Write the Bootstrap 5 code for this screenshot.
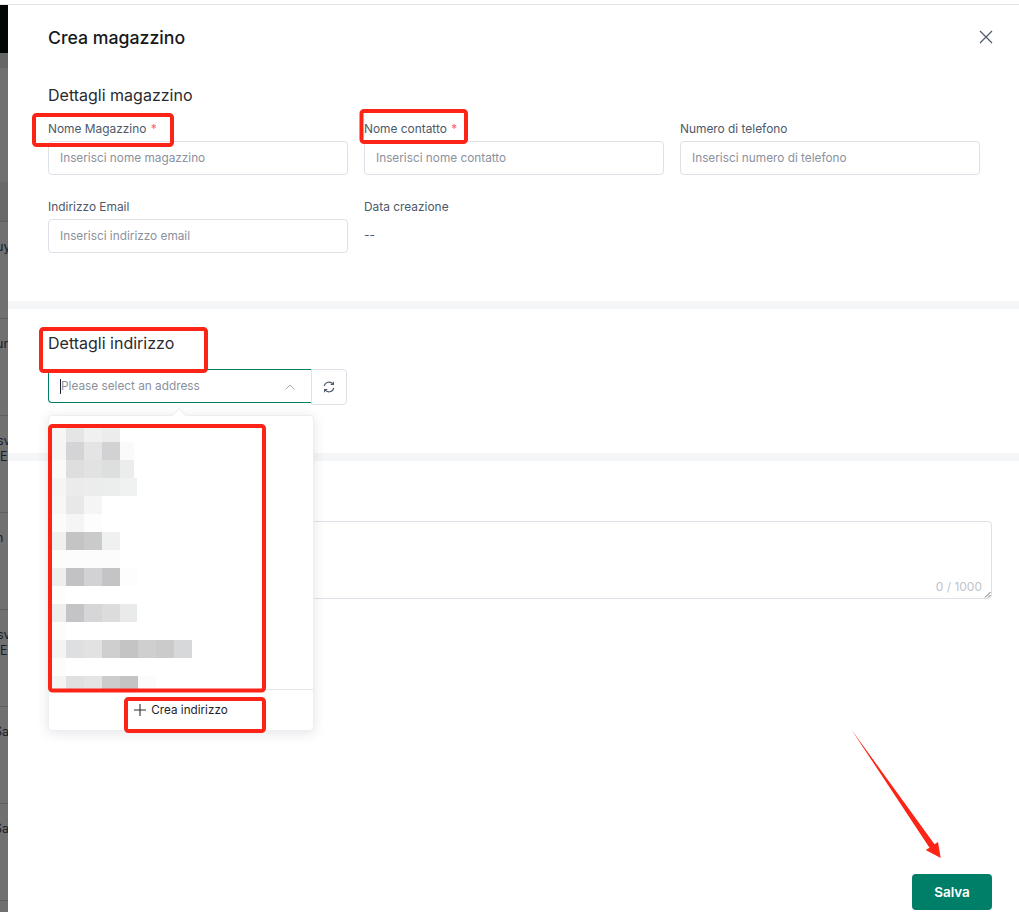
<!DOCTYPE html>
<html lang="it">
<head>
<meta charset="utf-8">
<title>Crea magazzino</title>
<link href="https://cdn.jsdelivr.net/npm/bootstrap@5.3.0/dist/css/bootstrap.min.css" rel="stylesheet">
<style>
html,body{height:912px;overflow:hidden}
body{font-family:Inter,"Noto Sans",sans-serif;color:#1f2329;background:#fff;font-size:13px}
.stage{height:912px;width:1019px;position:relative;padding-top:4px;overflow:hidden}
.topline{height:1px;background:#e3e4e6}
.shell{height:907px}
.strip{width:8px;flex:none;background:#707070;overflow:hidden;color:#16202b;font-size:12.500px;line-height:16px}
.strip-black{height:48px;background:#020605}
.strip-a{height:15px;background:#666}
.strip-b{height:114px}
.strip-c{height:40px;background:#696969;border-bottom:1px solid #5e5e5e}
.strip-row{height:97px;border-bottom:1px solid #5e5e5e;padding-top:17px;white-space:nowrap}
.strip-row span{display:block;margin-left:-4px}
.strip-row span.clip-s{margin-left:-3px}
.strip-row span.clip-e{margin-left:0}
.strip-row span.clip-a{margin-left:-6px}
.panel{flex:1;min-width:0;background:#fff;position:relative}
.head{height:66px;padding:0 26px 0 40px}
.head h1{font-size:17.700px;font-weight:500;margin:0;color:#16191d;line-height:24px}
.x-btn{border:0;background:none;padding:0;line-height:0;margin-top:-2px}
.sect{padding:0 40px}
.sect-title{font-size:16px;font-weight:400;color:#272b30;line-height:20px;margin:0}
.sect-one{height:230px;padding-top:14px}
.band{height:8px;background:#f5f6f8}
.grid3{display:grid;grid-template-columns:300px 300px 300px;column-gap:16px;row-gap:22px;margin-top:14px}
.fld-label{display:block;font-size:11.900px;line-height:20px;color:#4e5969;margin-bottom:2px}
.fld-label i{font-style:normal;color:#f5666a;margin-left:1px}
.fld-input{display:block;height:34px;width:100%;border:1px solid #dfe1e8;border-radius:4px;padding:0 11px;font-size:11.800px;color:#333;outline:0;font-family:inherit}
.fld-input::placeholder,.addr-ph{color:#8b919d}
.dash{line-height:32px;color:#4e5969;font-size:12px}
.sect-two{height:144px;padding-top:24px}
.addr{margin-top:16px;align-items:flex-start}
.addr-sel{width:264px;height:34px;border:1px solid #007f68;border-right:0;border-radius:4px 0 0 4px;padding:1px 17px 0 11px;font-size:11.800px}
.caret{width:1px;height:15px;background:#1c2733}
.addr-btn{width:36px;height:36px;margin-left:-1px;border:1px solid #dfe1e8;border-radius:0 4px 4px 0;background:#fff;padding:0;line-height:0}
.sect-three{padding-top:60px}
.note{height:78px;border:1px solid #dfe1e8;border-radius:4px;margin-right:-13px;position:relative}
.note-count{position:absolute;right:9px;bottom:3px;font-size:12px;line-height:16px;color:#bfc3cb}
.grip{position:absolute;right:0;bottom:0}
.pop{position:absolute;left:40px;top:410px;width:266px;height:316px;background:#fff;border:1px solid #eceef2;border-radius:4px;box-shadow:0 2px 12px rgba(40,45,70,.13);z-index:3}
.pop::before{content:"";position:absolute;left:125px;top:-6px;width:10px;height:10px;background:#fff;transform:rotate(45deg);border:1px solid #eceef2;border-right:0;border-bottom:0}
.pop-list{height:273px;overflow:hidden;position:relative}
.pop-list svg{display:block}
.pop-foot{height:41px;border-top:1px solid #e3e5ea;padding-top:10px;font-size:11.700px;line-height:20px;color:#1f2329}
.pop-foot svg{margin-right:5px}
.act{position:absolute;right:27px;bottom:2px;width:80px;height:36px;background:#007f68;border:0;border-radius:4px;color:#fff;font-size:13.500px;font-weight:600;padding:0}
.act:hover{background:#007f68;color:#fff}
.marks{position:absolute;left:0;top:0;z-index:5;pointer-events:none}
</style>
</head>
<body>
<div class="stage">
  <div class="topline"></div>
  <div class="d-flex shell">
    <div class="strip">
      <div class="strip-black"></div>
      <div class="strip-a"></div>
      <div class="strip-b"></div>
      <div class="strip-c"></div>
      <div class="strip-row"><span>uy</span></div>
      <div class="strip-row"><span>ur</span></div>
      <div class="strip-row"><span class="clip-s">sv</span><span class="clip-e">Ec</span></div>
      <div class="strip-row"><span>n</span></div>
      <div class="strip-row"><span class="clip-s">sv</span><span class="clip-e">Ec</span></div>
      <div class="strip-row"><span class="clip-a">Sa</span></div>
      <div class="strip-row"><span class="clip-a">Sa</span></div>
    </div>
    <div class="panel">
      <div class="head d-flex align-items-center justify-content-between">
        <h1>Crea magazzino</h1>
        <button class="x-btn" type="button" aria-label="Chiudi"><svg width="14" height="14" viewBox="0 0 14 14"><path d="M1 1l12 12M13 1L1 13" stroke="#4e5969" stroke-width="1.2" fill="none"/></svg></button>
      </div>
      <section class="sect sect-one">
        <h2 class="sect-title">Dettagli magazzino</h2>
        <div class="grid3">
          <div><label class="fld-label">Nome Magazzino <i>*</i></label><input class="fld-input" placeholder="Inserisci nome magazzino"></div>
          <div><label class="fld-label">Nome contatto <i>*</i></label><input class="fld-input" placeholder="Inserisci nome contatto"></div>
          <div><label class="fld-label">Numero di telefono</label><input class="fld-input" placeholder="Inserisci numero di telefono"></div>
          <div><label class="fld-label">Indirizzo Email</label><input class="fld-input" placeholder="Inserisci indirizzo email"></div>
          <div><span class="fld-label">Data creazione</span><div class="dash">--</div></div>
        </div>
      </section>
      <div class="band"></div>
      <section class="sect sect-two">
        <h2 class="sect-title">Dettagli indirizzo</h2>
        <div class="d-flex addr">
          <div class="addr-sel d-flex align-items-center">
            <span class="caret"></span><span class="addr-ph flex-grow-1">Please select an address</span>
            <svg width="10" height="6" viewBox="0 0 10 6"><path d="M.5 5.500L5 1l4.500 4.500" stroke="#a6abb5" fill="none"/></svg>
          </div>
          <button class="addr-btn" type="button" aria-label="Aggiorna"><svg width="12" height="12" viewBox="0 0 12 12" fill="none" stroke="#4e5969" stroke-width="1.1"><path d="M1.200 5A5 5 0 0 1 10 3.100M10.800 7A5 5 0 0 1 2 8.900"/><path d="M10.400.8v2.700H7.700M1.600 11.200V8.500h2.700"/></svg></button>
        </div>
      </section>
      <div class="band"></div>
      <section class="sect sect-three">
        <div class="note"><span class="note-count">0 / 1000</span>
          <svg class="grip" width="7" height="7" viewBox="0 0 7 7"><path d="M6.500 1L1 6.500M6.500 4L4 6.500" stroke="#444" stroke-width=".8"/></svg></div>
      </section>
      <div class="pop">
        <div class="pop-list">
          <svg width="264" height="273" viewBox="49 416 264 273" aria-hidden="true">
            <g shape-rendering="crispEdges">
              <rect x="52" y="424" width="14" height="18" fill="#f6f6f6"/><rect x="66" y="424" width="18" height="18" fill="#e5e5e5"/><rect x="84" y="424" width="18" height="18" fill="#f0f0f0"/><rect x="102" y="424" width="18" height="18" fill="#ececec"/>
              <rect x="52" y="442" width="14" height="18" fill="#f5f5f5"/><rect x="66" y="442" width="18" height="18" fill="#d4d4d6"/><rect x="84" y="442" width="18" height="18" fill="#e4e4e4"/><rect x="102" y="442" width="18" height="18" fill="#d2d2d4"/><rect x="120" y="442" width="14" height="18" fill="#fafafa"/>
              <rect x="52" y="460" width="14" height="18" fill="#fafafa"/><rect x="66" y="460" width="18" height="18" fill="#dedede"/><rect x="84" y="460" width="18" height="18" fill="#e2e2e2"/><rect x="102" y="460" width="18" height="18" fill="#dddfdf"/><rect x="120" y="460" width="14" height="18" fill="#ebedec"/>
              <rect x="52" y="478" width="14" height="18" fill="#f5f5f5"/><rect x="66" y="478" width="18" height="18" fill="#ebebeb"/><rect x="84" y="478" width="18" height="18" fill="#ececec"/><rect x="102" y="478" width="18" height="18" fill="#eceded"/><rect x="120" y="478" width="17" height="18" fill="#f0f2f1"/>
              <rect x="52" y="496" width="14" height="18" fill="#f7f7f7"/><rect x="66" y="496" width="18" height="18" fill="#e8e8e8"/><rect x="84" y="496" width="18" height="18" fill="#f5f5f5"/>
              <rect x="52" y="514" width="14" height="18" fill="#fbfbfb"/><rect x="66" y="514" width="18" height="18" fill="#f5f5f5"/><rect x="84" y="514" width="18" height="18" fill="#fdfdfd"/>
              <rect x="52" y="532" width="14" height="18" fill="#f0f0f0"/><rect x="66" y="532" width="18" height="18" fill="#c4c4c4"/><rect x="84" y="532" width="18" height="18" fill="#cacaca"/><rect x="102" y="532" width="18" height="18" fill="#eff1f0"/>
              <rect x="52" y="550" width="68" height="18" fill="#fcfcfc"/>
              <rect x="52" y="568" width="14" height="18" fill="#eeeeee"/><rect x="66" y="568" width="18" height="18" fill="#c2c2c4"/><rect x="84" y="568" width="18" height="18" fill="#d2d2d4"/><rect x="102" y="568" width="18" height="18" fill="#c4c4c6"/><rect x="120" y="568" width="18" height="18" fill="#fdfdfd"/>
              <rect x="52" y="586" width="14" height="18" fill="#fdfdfd"/>
              <rect x="52" y="604" width="14" height="18" fill="#eeeeee"/><rect x="66" y="604" width="18" height="18" fill="#c4c4c6"/><rect x="84" y="604" width="18" height="18" fill="#d6d6d8"/><rect x="102" y="604" width="18" height="18" fill="#dcdcdc"/><rect x="120" y="604" width="17" height="18" fill="#e9ebea"/>
              <rect x="52" y="622" width="14" height="18" fill="#fcfcfc"/>
              <rect x="52" y="640" width="14" height="18" fill="#f4f4f4"/><rect x="66" y="640" width="18" height="18" fill="#dedfe0"/><rect x="84" y="640" width="18" height="18" fill="#e2e2e3"/><rect x="102" y="640" width="18" height="18" fill="#cfcfcf"/><rect x="120" y="640" width="18" height="18" fill="#c4c4c4"/><rect x="138" y="640" width="18" height="18" fill="#cfcfcf"/><rect x="156" y="640" width="18" height="18" fill="#cbcbcb"/><rect x="174" y="640" width="18" height="18" fill="#d7d8d9"/>
              <rect x="52" y="658" width="14" height="18" fill="#fcfcfc"/>
              <rect x="52" y="676" width="14" height="14" fill="#f4f4f4"/><rect x="66" y="676" width="18" height="14" fill="#e0e0e1"/><rect x="84" y="676" width="18" height="14" fill="#e4e4e5"/><rect x="102" y="676" width="18" height="14" fill="#cccccc"/><rect x="120" y="676" width="18" height="14" fill="#c4c4c4"/><rect x="138" y="676" width="18" height="14" fill="#fbfbfb"/>
            </g>
          </svg>
        </div>
        <div class="pop-foot d-flex justify-content-center align-items-start">
          <svg class="mt-1" width="12" height="12" viewBox="0 0 12 12"><path d="M6 0v12M0 6h12" stroke="#2b2f36" stroke-width="1.1"/></svg><span>Crea indirizzo</span>
        </div>
      </div>
      <button class="btn act" type="button">Salva</button>
    </div>
  </div>
  <svg class="marks" width="1019" height="912" viewBox="0 0 1019 912" fill="none" stroke="#fb2416" stroke-width="4" aria-hidden="true">
    <rect x="34" y="115" width="138" height="30" rx="2.500"/>
    <rect x="361.500" y="111" width="104.500" height="31" rx="2.500"/>
    <rect x="41" y="329" width="165" height="42" rx="2.500"/>
    <rect x="50" y="426" width="214" height="264.500" rx="2.500"/>
    <rect x="126" y="699" width="138" height="32" rx="2.500"/>
    <path fill="#fb2416" stroke="none" d="M851 729L934.500 844.300L938 842L940.700 858L925.700 850L929.500 847.700Z"/>
  </svg>
</div>
</body>
</html>
